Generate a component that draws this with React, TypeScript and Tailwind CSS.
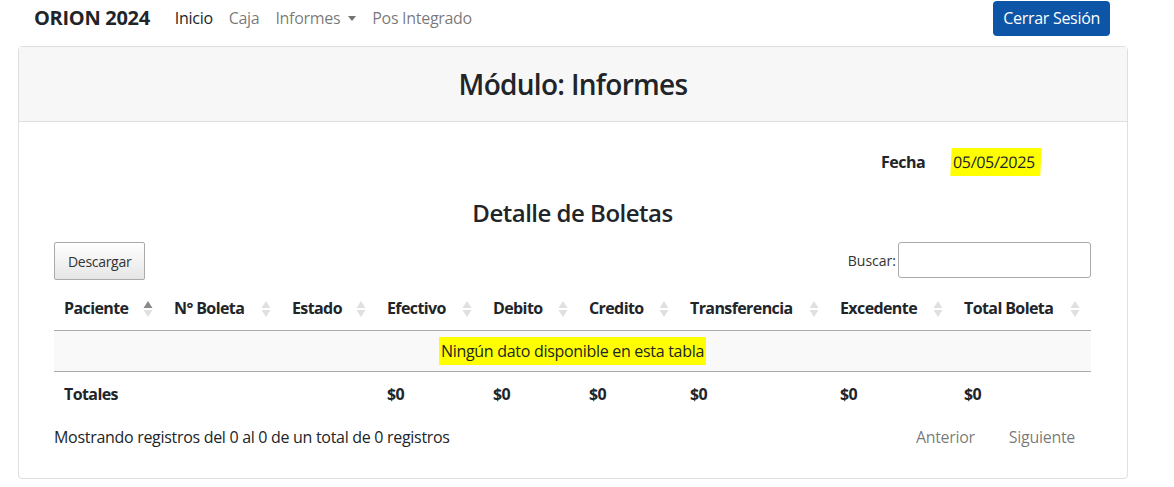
import React from "react";

const columns = [
  { label: "Paciente", width: "w-[110px]", active: true },
  { label: "N° Boleta", width: "w-[118px]" },
  { label: "Estado", width: "w-[95px]" },
  { label: "Efectivo", width: "w-[106px]" },
  { label: "Debito", width: "w-[96px]" },
  { label: "Credito", width: "w-[101px]" },
  { label: "Transferencia", width: "w-[150px]" },
  { label: "Excedente", width: "w-[124px]" },
  { label: "Total Boleta", width: "w-[137px]" },
];

const totals = ["Totales", "", "", "$0", "$0", "$0", "$0", "$0", "$0"];

function SortIcon({ active }: { active?: boolean }) {
  return (
    <svg className="absolute right-[11px] top-1/2 -translate-y-1/2" width="10" height="18" viewBox="0 0 10 18">
      <polygon points="5,1 9.5,8 0.5,8" fill={active ? "#8a8a8a" : "#e0e0e0"} />
      <polygon points="0.5,10 9.5,10 5,17" fill="#e0e0e0" />
    </svg>
  );
}

export default function App() {
  return (
    <div className="min-h-screen bg-white text-[#212529] font-['Segoe_UI','Open_Sans','Noto_Sans',sans-serif] text-[16px] tracking-[-0.3px]">
      {/* Navbar */}
      <nav className="flex items-center h-[36px] pl-[34px] pr-[64px]">
        <span className="text-[20px] font-bold mr-[25px]">ORION 2024</span>
        <div className="flex items-center gap-[16px]">
          <a className="text-[#212529]">Inicio</a>
          <a className="text-black/55">Caja</a>
          <a className="text-black/55 flex items-center">
            Informes
            <span className="ml-[8px] inline-block w-0 h-0 border-l-[4px] border-r-[4px] border-t-[5px] border-l-transparent border-r-transparent border-t-black/55" />
          </a>
          <a className="text-black/55">Pos Integrado</a>
        </div>
        <button className="ml-auto h-[35px] px-[10px] rounded-[4px] bg-[#0d55a6] text-white">Cerrar Sesión</button>
      </nav>

      {/* Card */}
      <div className="ml-[18px] mt-[10px] w-[1110px] border border-[#dfdfdf] rounded-[4px]">
        <div className="h-[75px] flex items-center justify-center bg-[#f7f7f7] border-b border-[#dfdfdf]">
          <h1 className="text-[28px] font-semibold tracking-[-0.7px]">Módulo: Informes</h1>
        </div>

        <div className="pl-[35px] pr-[36px] pt-[28px] pb-[25px]">
          <div className="flex justify-end h-[24px] items-center pr-[50px]">
            <span className="font-bold tracking-[-0.5px]">Fecha</span>
            <span className="ml-[26px] bg-[#ffff00] pl-[2px] pr-[6px] py-[2px] -skew-x-3">05/05/2025</span>
          </div>

          <h2 className="mt-[23px] text-center text-[24px] leading-[32px] font-semibold tracking-[-0.5px]">Detalle de Boletas</h2>

          <div className="mt-[13px] flex items-start justify-between">
            <button className="h-[38px] px-[13px] text-[14px] text-[#333] border border-[#aaa] rounded-[2px] bg-gradient-to-b from-white to-[#e6e6e6]">
              Descargar
            </button>
            <label className="flex items-center text-[14px] text-[#333] tracking-normal">
              Buscar:
              <input className="ml-[2px] w-[193px] h-[36px] border border-[#aaa] rounded-[3px] bg-white" />
            </label>
          </div>

          <table className="mt-[8px] w-[1037px] table-fixed border-collapse">
            <thead>
              <tr className="border-b border-[#aaa]">
                {columns.map((c) => (
                  <th key={c.label} className={`${c.width} relative h-[42px] pl-[10px] pb-[2px] text-left font-bold tracking-[-0.6px]`}>
                    {c.label}
                    <SortIcon active={c.active} />
                  </th>
                ))}
              </tr>
            </thead>
            <tbody>
              <tr className="bg-[#f9f9f9] border-b border-[#aaa]">
                <td colSpan={9} className="h-[41px] text-center">
                  <span className="bg-[#ffff00] px-[2px] py-[3px]">Ningún dato disponible en esta tabla</span>
                </td>
              </tr>
            </tbody>
            <tfoot>
              <tr>
                {totals.map((t, i) => (
                  <td key={i} className="h-[46px] pl-[10px] font-bold tracking-[-0.6px]">
                    {t}
                  </td>
                ))}
              </tr>
            </tfoot>
          </table>

          <div className="mt-[4px] flex items-center justify-between h-[32px]">
            <span>Mostrando registros del 0 al 0 de un total de 0 registros</span>
            <div className="flex items-center text-black/55">
              <span className="px-[18px]">Anterior</span>
              <span className="px-[16px]">Siguiente</span>
            </div>
          </div>
        </div>
      </div>
    </div>
  );
}
